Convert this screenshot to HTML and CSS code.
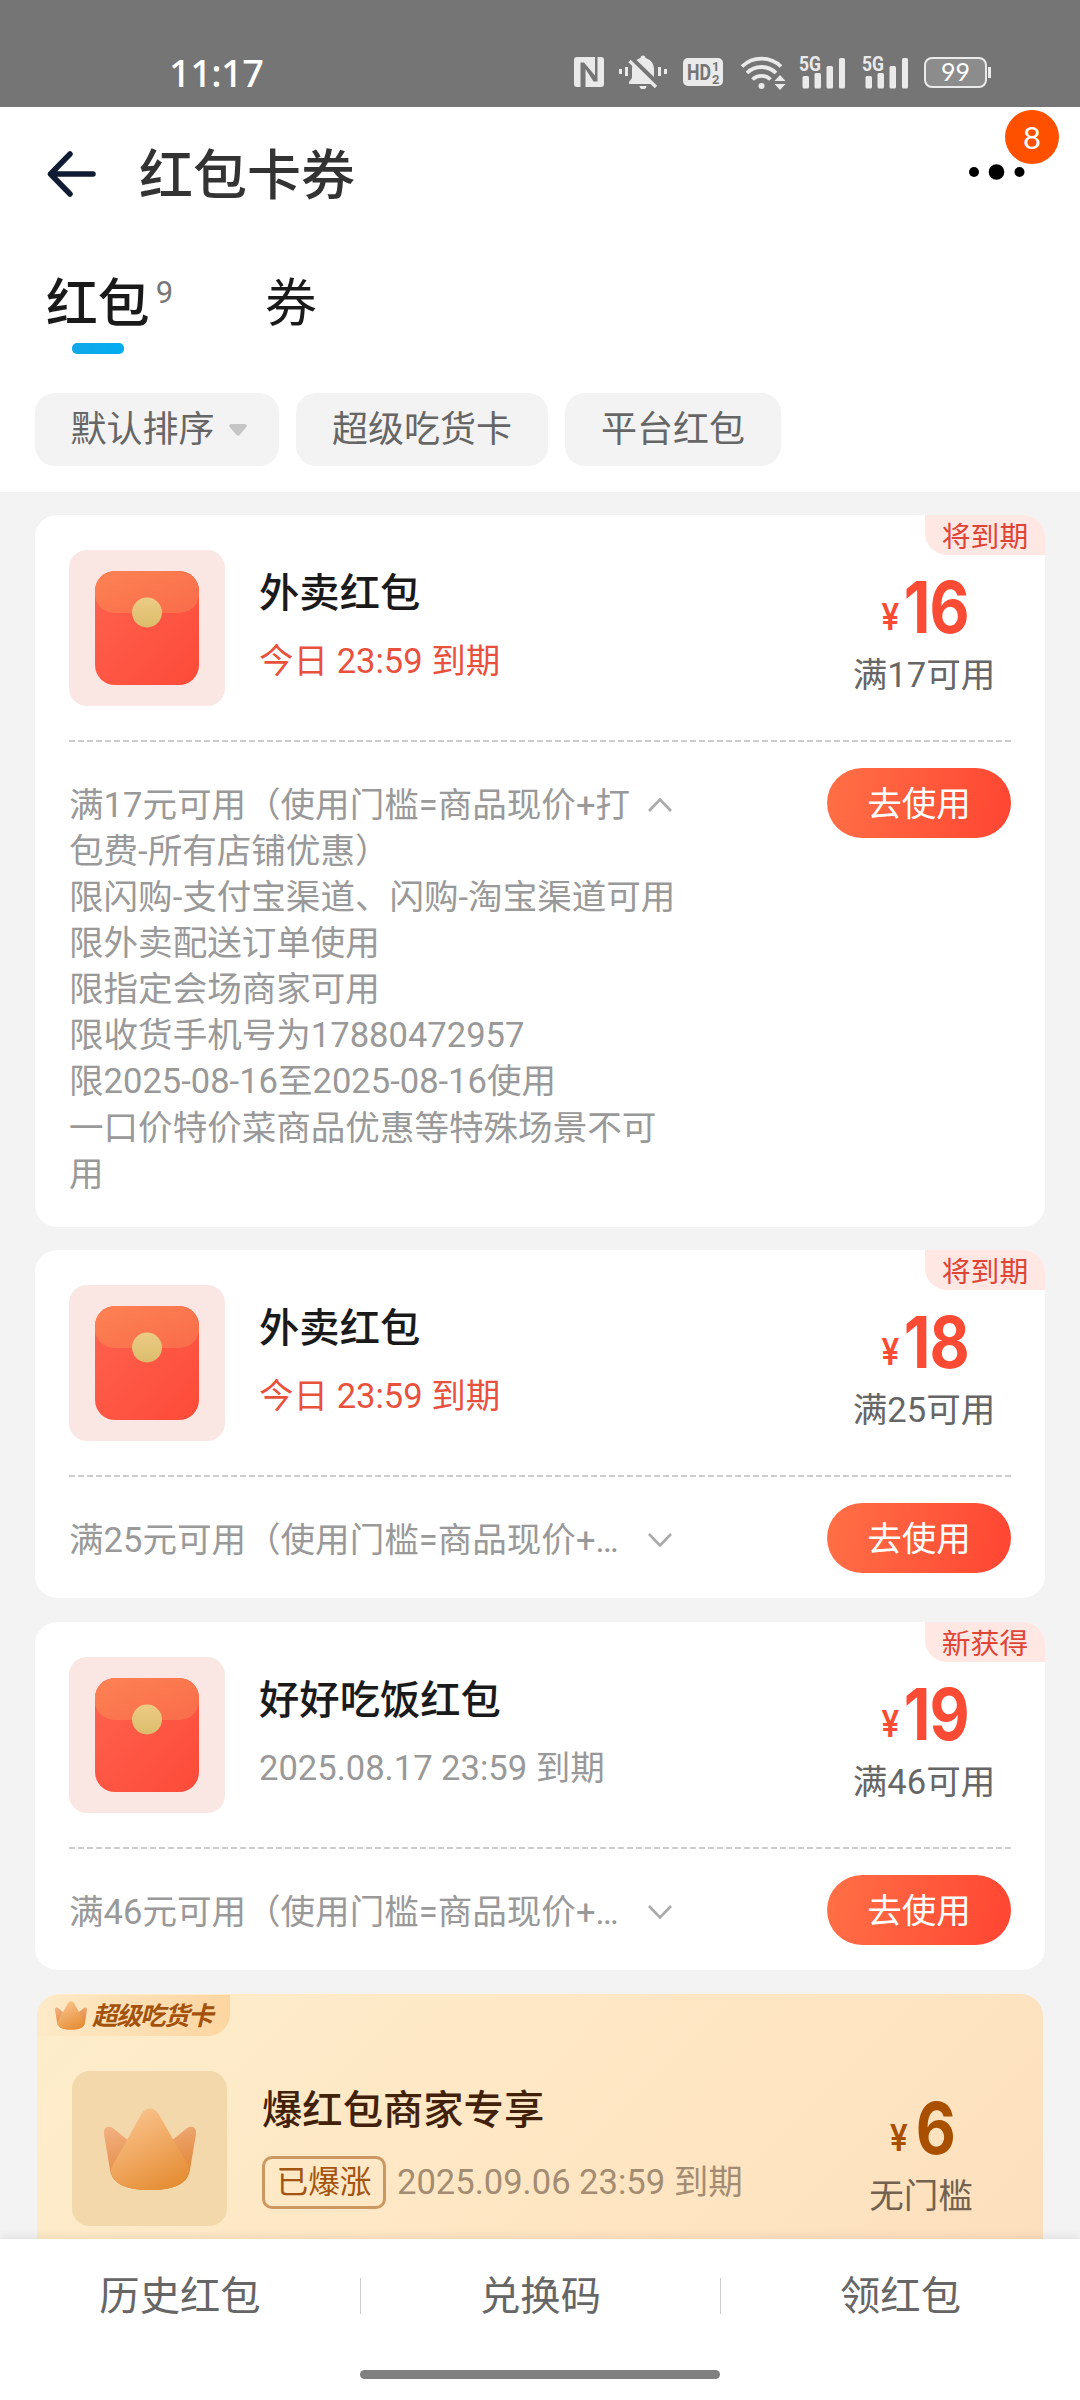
FILE: index.html
```html
<!DOCTYPE html>
<html lang="zh-CN">
<head>
<meta charset="utf-8">
<title>红包卡券</title>
<link rel="stylesheet" href="styles.css">
</head>
<body>
<svg class="defs" width="0" height="0" aria-hidden="true">
  <defs>
    <linearGradient id="body-red" x1="0" y1="0" x2="1" y2="1"><stop offset="0" stop-color="#ff6350"/><stop offset="1" stop-color="#fd4a38"/></linearGradient>
    <linearGradient id="flap" x1="0" y1="0" x2="1" y2="1"><stop offset="0" stop-color="#fd8253"/><stop offset="1" stop-color="#f96c4a"/></linearGradient>
    <linearGradient id="coin" x1="0" y1="0" x2="0" y2="1"><stop offset="0" stop-color="#eccb84"/><stop offset="1" stop-color="#dcbd6c"/></linearGradient>
    <linearGradient id="crown-mid" x1="0.2" y1="0" x2="0.7" y2="1"><stop offset="0" stop-color="#fbc590"/><stop offset="1" stop-color="#e58e35"/></linearGradient>
    <linearGradient id="crown-side" x1="0" y1="0" x2="0.3" y2="1"><stop offset="0" stop-color="#f2b184"/><stop offset="1" stop-color="#e08230"/></linearGradient>
    <symbol id="envelope" viewBox="0 0 104 114">
      <rect width="104" height="114" rx="20" fill="url(#body-red)"/>
      <path d="M20 0H84A20 20 0 0 1 104 20V23A20 19 0 0 1 84 42H20A20 19 0 0 1 0 23V20A20 20 0 0 1 20 0Z" fill="url(#flap)"/>
      <circle cx="52" cy="41.500" r="15" fill="url(#coin)"/>
    </symbol>
    <symbol id="crown" viewBox="0 0 92 83">
      <path d="M0 26C-1 18 6 17 10 21L30 37H62L82 21C86 17 93 18 92 26L86 62C84 74 74 82 46 82C18 82 8 74 6 62Z" fill="url(#crown-side)"/>
      <path d="M38 5C42-1 50-1 54 5L78 47C84 57 86 59 85 64C82 76 70 82 46 82C22 82 10 76 7 64C7 59 10 55 14 48Z" fill="url(#crown-mid)"/>
    </symbol>
  </defs>
</svg>
<div class="screen">
  <div class="status">
    <span class="clock">11:17</span>
    <div class="status-icons">
      <svg class="nfc" viewBox="0 0 30 30"><path fill-rule="evenodd" fill="#eaeaea" d="M3 0H21V18.500L10 5.500H6.500V30H3A3 3 0 0 1 0 27V3A3 3 0 0 1 3 0ZM23.500 0H27A3 3 0 0 1 30 3V27A3 3 0 0 1 27 30H11.500V12L19.500 24.500H23.500Z"/></svg>
      <svg class="bell" viewBox="0 0 48 34"><g fill="#eaeaea"><path d="M21.500 3A2.500 2.500 0 0 1 26.500 3C32 4.500 35 9 35 14V23L38 27V29H10V27L13 23V14C13 9 16 4.500 21.500 3Z"/><path d="M20.500 31H27.500A3.500 3.200 0 0 1 20.500 31Z"/><rect x="0" y="14" width="3" height="5"/><rect x="6" y="12" width="3" height="9"/><rect x="39" y="12" width="3" height="9"/><rect x="45" y="14" width="3" height="5"/></g><path d="M13 5L40 31" stroke="#757575" stroke-width="6"/><path d="M10.500 6L37 32" stroke="#eaeaea" stroke-width="3.200"/></svg>
      <svg class="hd" viewBox="0 0 40 28"><rect width="40" height="28" rx="5" fill="#eaeaea"/><text x="4" y="22" class="hd-text" textLength="24" lengthAdjust="spacingAndGlyphs">HD</text><text x="29" y="13" class="hd-num">1</text><text x="29" y="25.500" class="hd-num">2</text></svg>
      <svg class="wifi" viewBox="0 0 44 34"><g fill="none" stroke="#eaeaea" stroke-width="3.800"><path d="M1 11.500A28 28 0 0 1 40 11.500"/><path d="M6 18A20.500 20.500 0 0 1 35 18"/><path d="M11.500 24.500A13 13 0 0 1 29.500 24.500"/></g><circle cx="20.500" cy="31" r="3" fill="#eaeaea"/><path d="M33.500 26L39 20L44.500 26ZM33.500 29L39 35L44.500 29Z" fill="#eaeaea"/></svg>
      <svg class="signal" viewBox="0 0 46 33"><g fill="#eaeaea"><rect x="3.500" y="20" width="6.500" height="12.500" rx="1.500"/><rect x="15.500" y="17" width="6.500" height="15.500" rx="1.500"/><rect x="27.500" y="10" width="6.500" height="22.500" rx="1.500"/><rect x="40" y="2" width="6" height="30.500" rx="1.500"/></g><text x="0" y="15" class="g5" textLength="22" lengthAdjust="spacingAndGlyphs">5G</text></svg>
      <svg class="signal" viewBox="0 0 46 33"><g fill="#eaeaea"><rect x="3.500" y="20" width="6.500" height="12.500" rx="1.500"/><rect x="15.500" y="17" width="6.500" height="15.500" rx="1.500"/><rect x="27.500" y="10" width="6.500" height="22.500" rx="1.500"/><rect x="40" y="2" width="6" height="30.500" rx="1.500"/></g><text x="0" y="15" class="g5" textLength="22" lengthAdjust="spacingAndGlyphs">5G</text></svg>
      <svg class="battery" viewBox="0 0 67 31"><rect x="1" y="1" width="61" height="29" rx="7" fill="#8c8c8c" stroke="#eaeaea" stroke-width="2"/><rect x="64" y="10" width="3" height="11" fill="#eaeaea"/><text x="31.500" y="24" text-anchor="middle" class="battery-text">99</text></svg>
    </div>
  </div>

  <header class="header">
    <svg class="back" viewBox="0 0 50 46"><path d="M23 3L3.500 23L23 43M3.500 23H46" fill="none" stroke="#101c33" stroke-width="5.500" stroke-linecap="round" stroke-linejoin="round"/></svg>
    <h1 class="title">红包卡券</h1>
    <div class="more">
      <svg class="dots" viewBox="0 0 56 18"><circle cx="5" cy="9" r="5"/><circle cx="27.500" cy="9" r="7.800"/><circle cx="50.500" cy="9" r="5"/></svg>
      <span class="count">8</span>
    </div>
  </header>

  <nav class="tabs">
    <div class="tab tab-on"><span class="tab-name">红包</span><span class="tab-count">9</span></div>
    <div class="tab">券</div>
  </nav>

  <div class="filters">
    <div class="filter filter-sort">默认排序<svg class="caret" viewBox="0 0 18 12"><path d="M2 0H16Q19 1 17 3.500L10.500 11Q9 12.500 7.500 11L1 3.500Q-1 1 2 0Z" fill="#c5c5c5"/></svg></div>
    <div class="filter filter-card">超级吃货卡</div>
    <div class="filter filter-plat">平台红包</div>
  </div>

  <main class="list">
    <section class="card">
      <span class="flag">将到期</span>
      <div class="top">
        <div class="thumb"><svg class="envelope"><use href="#envelope"/></svg></div>
        <div class="info"><h2 class="name">外卖红包</h2><div class="date soon">今日 23:59 到期</div></div>
        <div class="value"><div class="price"><span class="yen">¥</span><span class="num">16</span></div><div class="limit">满17可用</div></div>
      </div>
      <div class="dash"></div>
      <div class="bottom">
        <div class="rules rules-open">
          <svg class="chev" viewBox="0 0 24 14"><path d="M1 13L12 1.500L23 13" fill="none" stroke="#aaa" stroke-width="2.600"/></svg>
          满17元可用（使用门槛=商品现价+打<br>包费-所有店铺优惠）<br>限闪购-支付宝渠道、闪购-淘宝渠道可用<br>限外卖配送订单使用<br>限指定会场商家可用<br>限收货手机号为17880472957<br>限2025-08-16至2025-08-16使用<br>一口价特价菜商品优惠等特殊场景不可<br>用
        </div>
        <div class="use">去使用</div>
      </div>
    </section>

    <section class="card">
      <span class="flag">将到期</span>
      <div class="top">
        <div class="thumb"><svg class="envelope"><use href="#envelope"/></svg></div>
        <div class="info"><h2 class="name">外卖红包</h2><div class="date soon">今日 23:59 到期</div></div>
        <div class="value"><div class="price"><span class="yen">¥</span><span class="num">18</span></div><div class="limit">满25可用</div></div>
      </div>
      <div class="dash"></div>
      <div class="bottom">
        <div class="rules"><svg class="chev" viewBox="0 0 24 14"><path d="M1 1L12 12.500L23 1" fill="none" stroke="#aaa" stroke-width="2.600"/></svg>满25元可用（使用门槛=商品现价+…</div>
        <div class="use">去使用</div>
      </div>
    </section>

    <section class="card">
      <span class="flag">新获得</span>
      <div class="top">
        <div class="thumb"><svg class="envelope"><use href="#envelope"/></svg></div>
        <div class="info"><h2 class="name">好好吃饭红包</h2><div class="date">2025.08.17 23:59 到期</div></div>
        <div class="value"><div class="price"><span class="yen">¥</span><span class="num">19</span></div><div class="limit">满46可用</div></div>
      </div>
      <div class="dash"></div>
      <div class="bottom">
        <div class="rules"><svg class="chev" viewBox="0 0 24 14"><path d="M1 1L12 12.500L23 1" fill="none" stroke="#aaa" stroke-width="2.600"/></svg>满46元可用（使用门槛=商品现价+…</div>
        <div class="use">去使用</div>
      </div>
    </section>

    <section class="card gold">
      <div class="gold-flag"><svg class="crown-small"><use href="#crown"/></svg><span class="gold-flag-text">超级吃货卡</span></div>
      <div class="top">
        <div class="thumb"><svg class="crown-big"><use href="#crown"/></svg></div>
        <div class="info"><h2 class="name">爆红包商家专享</h2><div class="date"><span class="boost">已爆涨</span>2025.09.06 23:59 到期</div></div>
        <div class="value"><div class="price"><span class="yen">¥</span><span class="num">6</span></div><div class="limit">无门槛</div></div>
      </div>
    </section>
  </main>

  <footer class="footer">
    <div class="links">
      <div class="link">历史红包</div>
      <div class="link">兑换码</div>
      <div class="link">领红包</div>
    </div>
    <div class="home"></div>
  </footer>
</div>
</body>
</html>
```
FILE: styles.css
```css
* { box-sizing: border-box; margin: 0; padding: 0; }
body { font-family: Roboto, "Noto Sans CJK SC", sans-serif; background: #f3f3f3; color: #1a1a1a; }
svg { display: block; flex: none; }
.defs { position: absolute; }
.screen { width: 1080px; height: 2400px; display: flex; flex-direction: column; overflow: hidden; }

.status { height: 107px; flex: none; background: #757575; display: flex; justify-content: space-between; padding: 0 89px 0 169px; }
.clock { margin-top: 47px; height: 50px; line-height: 50px; font-family: "Noto Sans", sans-serif; font-weight: 500; font-size: 38px; letter-spacing: -0.600px; color: #fff; }
.status-icons { display: flex; align-items: center; height: 34px; margin-top: 55px; }
.nfc { width: 30px; height: 30px; }
.bell { width: 48px; height: 34px; margin-left: 15px; }
.hd { width: 40px; height: 28px; margin-left: 16px; }
.wifi { width: 44px; height: 34px; margin-left: 18px; overflow: visible; }
.signal { width: 46px; height: 33px; margin-left: 14px; overflow: visible; }
.signal + .signal { margin-left: 17px; }
.battery { width: 67px; height: 31px; margin-left: 16px; }
.hd-text { font: 700 22px Roboto, sans-serif; fill: #757575; }
.hd-num { font: 700 13px Roboto, sans-serif; fill: #757575; }
.g5 { font: 700 21px Roboto, sans-serif; fill: #eaeaea; stroke: #757575; stroke-width: 1; paint-order: stroke; }
.battery-text { font: 400 25px Lato, sans-serif; fill: #fff; }

.header { height: 135px; flex: none; background: #fff; display: flex; align-items: center; padding: 0 55px 0 47px; }
.back { width: 50px; height: 46px; margin-top: -2px; }
.title { margin: 5px 0 0 42px; flex: 1; font-size: 54px; font-weight: 500; line-height: 60px; color: #333; }
.more { position: relative; }
.dots { width: 56px; height: 18px; margin-top: -5px; }
.count { position: absolute; left: 36px; top: -58px; width: 54px; height: 54px; border-radius: 50%; background: #ff5000; color: #fff; font: 400 31px/54px Lato, sans-serif; text-align: center; }

.tabs { height: 151px; flex: none; background: #fff; display: flex; padding: 29px 0 0 46px; gap: 92px; font-size: 51.840px; line-height: 68px; }
.tab { height: 86px; display: flex; }
.tab-on { font-weight: 500; position: relative; }
.tab-on::after { content: ""; position: absolute; left: 26px; top: 72px; width: 52px; height: 11px; border-radius: 5px; background: linear-gradient(90deg, #12a8e8, #00acf2); }
.tab-count { font-weight: 400; font-size: 31px; line-height: 44px; color: #777; margin-left: 6px; }

.filters { height: 99px; flex: none; background: #fff; display: flex; padding-left: 35px; gap: 17px; }
.filter { height: 73px; border-radius: 20px; background: #f3f3f3; display: flex; align-items: center; justify-content: center; font-size: 36px; line-height: 50px; color: #666; }
.filter-sort { width: 244px; gap: 14px; padding-left: 3px; }
.filter-card { width: 252px; }
.filter-plat { width: 216px; }
.caret { width: 18px; height: 12px; }

.list { flex: 1; min-height: 0; overflow: hidden; padding: 23px 35px 0; display: flex; flex-direction: column; gap: 23.500px; }
.card { flex: none; position: relative; background: #fff; border-radius: 22px; padding: 35px 34px 25px; min-height: 348px; }
.flag { position: absolute; right: 0; top: 0; width: 120px; height: 40px; border-radius: 0 22px 0 22px; background: #ffe7e3; color: #de4536; font-size: 28.800px; line-height: 45px; text-align: center; }
.top { display: flex; height: 156px; }
.thumb { width: 156px; height: 156px; flex: none; border-radius: 18px; background: #fae7e3; display: flex; justify-content: center; align-items: center; }
.envelope { width: 104px; height: 114px; }
.info { flex: 1; margin-left: 34px; padding-top: 17px; }
.name { font-size: 40.320px; font-weight: 500; line-height: 54px; }
.date { margin-top: 17px; height: 46px; font-size: 34.560px; line-height: 46px; color: #999; display: flex; align-items: center; white-space: pre; }
.soon { color: #e9513f; }
.value { width: 174px; flex: none; display: flex; flex-direction: column; align-items: center; }
.price { display: flex; align-items: baseline; height: 84px; line-height: 84px; margin-top: 15px; padding-left: 3px; font-family: Inter, sans-serif; font-weight: 700; color: #fc4b35; transform: scaleX(0.870); }
.yen { font-size: 37px; font-weight: 600; position: relative; top: -3px; margin-right: 5px; }
.num { font-size: 71px; letter-spacing: -1px; }
.limit { font-size: 34.560px; line-height: 46px; margin-top: 3px; color: #666; }
.dash { height: 2px; margin-top: 34px; background: repeating-linear-gradient(90deg, #cdcdcd 0 6px, #fff 6px 9px); }
.bottom { display: flex; justify-content: space-between; padding-top: 26px; }
.rules { width: 608px; margin-top: 14px; font-size: 34.560px; line-height: 46.080px; color: #999; white-space: nowrap; }
.rules-open { padding-bottom: 5px; }
.chev { float: right; width: 24px; height: 14px; margin: 16px 5px 0 0; }
.use { width: 184px; height: 70px; border-radius: 35px; background: linear-gradient(100deg, #ff7046, #ff4532); color: #fff; font-size: 34.560px; line-height: 72px; text-align: center; }

.gold { margin: 1px 2px 0; padding: 77px 35px 0; background: linear-gradient(135deg, #fdedcb, #ffe5c2 60%, #fcdfbd); }
.gold-flag { position: absolute; left: 0; top: 1px; width: 193px; height: 41px; border-radius: 22px 0 22px 0; background: linear-gradient(90deg, #fdeac8, #fdd5a0); display: flex; align-items: center; padding-left: 18px; }
.crown-small { width: 32px; height: 29px; }
.gold-flag-text { margin-left: 5px; font-size: 25.500px; letter-spacing: -1.500px; font-weight: 700; font-style: italic; line-height: 40px; color: #a3520b; }
.gold .thumb { width: 155px; height: 155px; background: #f3d8ac; }
.crown-big { width: 92px; height: 83px; margin-top: 2px; }
.gold .info { margin-left: 35px; padding-top: 13px; }
.gold .name { color: #42210b; }
.gold .date { margin-top: 21px; color: #a38d72; }
.boost { height: 53px; width: 124px; margin-right: 11px; border: 3px solid #cb9862; border-radius: 10px; font-size: 31.680px; line-height: 48px; text-align: center; color: #a35410; }
.gold .price { color: #a85000; }
.gold .yen { margin-right: 9px; }
.gold .limit { color: #736250; }

.footer { height: 161px; flex: none; background: #fff; position: relative; box-shadow: 0 -3px 8px rgba(0, 0, 0, 0.070); display: flex; flex-direction: column; align-items: center; }
.links { display: flex; width: 1080px; padding-top: 39px; }
.link { width: 360px; height: 36px; line-height: 37px; text-align: center; font-size: 40.320px; color: #666; }
.link + .link { border-left: 1px solid #ccc; }
.home { width: 360px; height: 9px; border-radius: 5px; background: #808080; margin-top: 56px; }
```
